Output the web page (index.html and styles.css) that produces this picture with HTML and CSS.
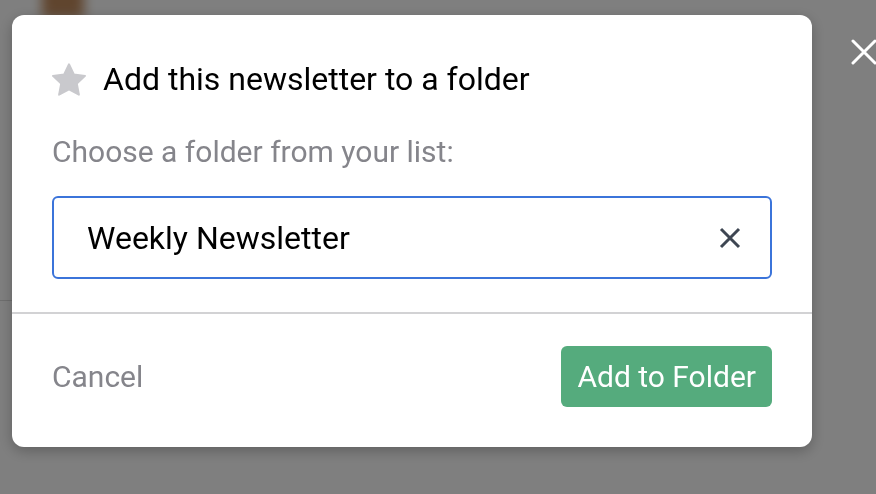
FILE: index.html
```html
<html>
<head>
  <link rel="stylesheet" href="styles.css">
</head>
<body>
  <div class="page">
    <div class="page-photo"></div>
    <div class="page-rule"></div>
  </div>
  <div class="overlay">
    <button class="overlay-close" aria-label="Close">
      <svg width="26" height="26" viewBox="0 0 26 26"><path d="M2 2 L24 24 M24 2 L2 24" stroke="#fff" stroke-width="3" stroke-linecap="round"/></svg>
    </button>
    <div class="modal">
      <div class="modal-body">
        <div class="modal-title">
          <svg class="star" width="34" height="33" viewBox="1.2 1.2 21.6 20.6"><path d="M12 1.8 L15.1 8.3 L22.2 9.2 L17 14.1 L18.3 21.2 L12 17.8 L5.7 21.2 L7 14.1 L1.8 9.2 L8.9 8.3 Z" fill="#c9c9cd" stroke="#c9c9cd" stroke-width="1.2" stroke-linejoin="round"/></svg>
          <span>Add this newsletter to a folder</span>
        </div>
        <div class="modal-label">Choose a folder from your list:</div>
        <div class="select">
          <span class="select-value">Weekly Newsletter</span>
          <svg class="select-clear" width="22" height="22" viewBox="0 0 22 22"><path d="M2 2 L20 20 M20 2 L2 20" stroke="#3e4652" stroke-width="3"/></svg>
        </div>
      </div>
      <div class="modal-footer">
        <a class="cancel" href="#">Cancel</a>
        <button class="primary">Add to Folder</button>
      </div>
    </div>
  </div>
</body>
</html>
```
FILE: styles.css
```css
body {
  margin: 0;
  font-family: Roboto, "Liberation Sans", sans-serif;
  background: #fff;
}

.page {
  position: relative;
  height: 494px;
  overflow: hidden;
}

.page-photo {
  position: absolute;
  left: 42px;
  top: -40px;
  width: 42px;
  height: 58px;
  background: #c08a5c;
  filter: blur(6px);
}

.page-rule {
  position: absolute;
  left: 0;
  top: 300px;
  width: 12px;
  height: 1px;
  background: #ddd;
}

.overlay {
  position: fixed;
  inset: 0;
  background: rgba(0, 0, 0, 0.5);
  padding: 15px 0 0 12px;
}

.overlay-close {
  position: absolute;
  right: -1px;
  top: 39px;
  background: transparent;
  border: none;
  padding: 0;
}

.modal {
  width: 800px;
  background: #fff;
  border-radius: 12px;
  box-shadow: 0 4px 14px rgba(0, 0, 0, 0.25);
}

.modal-body {
  padding: 44px 40px 33px;
  border-bottom: 2px solid #d2d2d4;
}

.modal-title {
  display: flex;
  align-items: center;
  gap: 17px;
  font-size: 32px;
  line-height: 40px;
  color: #000;
}

.modal-label {
  margin-top: 35px;
  font-size: 30px;
  line-height: 36px;
  color: #85858b;
}

.select {
  margin-top: 26px;
  height: 83px;
  box-sizing: border-box;
  border: 2px solid #3b74da;
  border-radius: 6px;
  display: flex;
  align-items: center;
  justify-content: space-between;
  padding: 0 29px 0 33px;
}

.select-value {
  font-size: 32px;
  color: #000;
}

.modal-footer {
  display: flex;
  justify-content: space-between;
  align-items: center;
  padding: 32px 40px 40px;
}

.cancel {
  font-size: 30px;
  color: #85858b;
  text-decoration: none;
}

.primary {
  height: 61px;
  padding: 0 16px;
  border: none;
  border-radius: 6px;
  background: #55ab7d;
  color: #fff;
  font-family: Roboto, "Liberation Sans", sans-serif;
  font-size: 30px;
}
```
